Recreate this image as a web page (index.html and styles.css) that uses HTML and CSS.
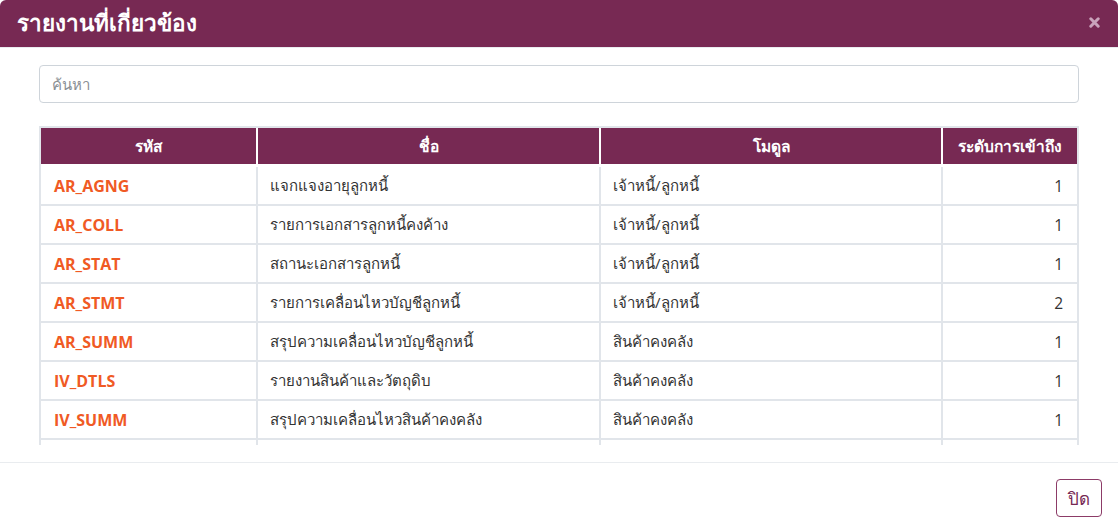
FILE: index.html
```html
<!DOCTYPE html>
<html lang="th">
<head>
<meta charset="utf-8">
<title>รายงานที่เกี่ยวข้อง</title>
<link rel="stylesheet" href="styles.css">
</head>
<body>
<div class="modal">
  <header class="modal-header">
    <h5 class="modal-title">รายงานที่เกี่ยวข้อง</h5>
    <button class="close" type="button" aria-label="Close">
      <svg width="11" height="11" viewBox="0 0 11 11"><path d="M1.8 1.8 L9.2 9.2 M9.2 1.8 L1.8 9.2" stroke="currentColor" stroke-width="3" stroke-linecap="round" fill="none"/></svg>
    </button>
  </header>
  <div class="modal-body">
    <input class="search" type="text" placeholder="ค้นหา">
    <div class="table-wrap">
      <table class="report-table">
        <thead>
          <tr>
            <th class="c-code">รหัส</th>
            <th class="c-name">ชื่อ</th>
            <th class="c-mod">โมดูล</th>
            <th class="c-lvl">ระดับการเข้าถึง</th>
          </tr>
        </thead>
        <tbody>
          <tr><td class="code">AR_AGNG</td><td>แจกแจงอายุลูกหนี้</td><td>เจ้าหนี้/ลูกหนี้</td><td class="num">1</td></tr>
          <tr><td class="code">AR_COLL</td><td>รายการเอกสารลูกหนี้คงค้าง</td><td>เจ้าหนี้/ลูกหนี้</td><td class="num">1</td></tr>
          <tr><td class="code">AR_STAT</td><td>สถานะเอกสารลูกหนี้</td><td>เจ้าหนี้/ลูกหนี้</td><td class="num">1</td></tr>
          <tr><td class="code">AR_STMT</td><td>รายการเคลื่อนไหวบัญชีลูกหนี้</td><td>เจ้าหนี้/ลูกหนี้</td><td class="num">2</td></tr>
          <tr><td class="code">AR_SUMM</td><td>สรุปความเคลื่อนไหวบัญชีลูกหนี้</td><td>สินค้าคงคลัง</td><td class="num">1</td></tr>
          <tr><td class="code">IV_DTLS</td><td>รายงานสินค้าและวัตถุดิบ</td><td>สินค้าคงคลัง</td><td class="num">1</td></tr>
          <tr><td class="code">IV_SUMM</td><td>สรุปความเคลื่อนไหวสินค้าคงคลัง</td><td>สินค้าคงคลัง</td><td class="num">1</td></tr>
          <tr><td></td><td></td><td></td><td></td></tr>
        </tbody>
      </table>
    </div>
  </div>
  <footer class="modal-footer">
    <button class="btn-close" type="button">ปิด</button>
  </footer>
</div>
</body>
</html>
```
FILE: styles.css
```css
* { box-sizing: border-box; }
html, body { margin: 0; padding: 0; background: #fff; }
body {
  font-family: "Open Sans", "Noto Sans", sans-serif;
  color: #333;
  font-size: 15px;
}
.modal {
  width: 1118px;
  height: 532px;
  display: flex;
  flex-direction: column;
  background: #fff;
}
.modal-header {
  height: 48px;
  background: #772953;
  border-radius: 6px 6px 0 0;
  border-bottom: 1px solid #e9ecef;
  display: flex;
  align-items: center;
  justify-content: space-between;
  padding: 0 18px 0 17px;
}
.modal-title {
  margin: 0;
  color: #fff;
  font-size: 22.5px;
  font-weight: 700;
  line-height: 1;
}
.close {
  border: 0;
  background: transparent;
  color: #c9a3bb;
  padding: 0;
  width: 11px;
  height: 11px;
  display: flex;
  margin-top: -3px;
}
.modal-body {
  padding: 17px 39px 17px 39px;
  display: flex;
  flex-direction: column;
}
.search {
  width: 1040px;
  height: 38px;
  border: 1px solid #ced4da;
  border-radius: 4px;
  padding: 0 12px;
  font-family: inherit;
  font-size: 15px;
  color: #495057;
}
.search::placeholder { color: #8a8f94; }
.table-wrap {
  margin-top: 23px;
  width: 1040px;
  height: 319px;
  overflow: hidden;
  border: 2px solid #e1e5ea;
  border-bottom: 0;
}
.report-table {
  width: 1036px;
  border-collapse: separate;
  border-spacing: 0;
  table-layout: fixed;
}
.report-table th {
  background: #772953;
  color: #fff;
  font-weight: 700;
  font-size: 15.5px;
  height: 39px;
  text-align: center;
  border-right: 2px solid #fff;
  border-bottom: 3px solid #fff;
  padding: 0 8px;
}
.report-table th:last-child { border-right: 0; }
.c-code { width: 217px; }
.c-name { width: 343px; }
.c-mod { width: 342px; }
.c-lvl { width: 134px; }
.report-table td {
  height: 39px;
  border-top: 2px solid #e1e5ea;
  border-right: 2px solid #e1e5ea;
  padding: 0 12px;
  font-size: 15px;
  color: #333;
  white-space: nowrap;
}
.report-table td:last-child { border-right: 0; }
.report-table tbody tr:first-child td { border-top: 0; height: 37px; }
.report-table td.code {
  color: #f05a24;
  font-weight: 700;
  font-size: 16px;
  padding-left: 13px;
}
.report-table td.num {
  text-align: right;
  padding-right: 14px;
  font-size: 15.5px;
}
.modal-footer {
  border-top: 1px solid #e9ecef;
  flex: 1;
  display: flex;
  justify-content: flex-end;
  align-items: flex-start;
  padding: 16px 16px 0 0;
}
.btn-close {
  width: 46px;
  height: 38px;
  border: 1px solid #8c3b67;
  border-radius: 4px;
  background: #fff;
  color: #772953;
  font-family: inherit;
  font-size: 17px;
  padding: 0;
}
```
